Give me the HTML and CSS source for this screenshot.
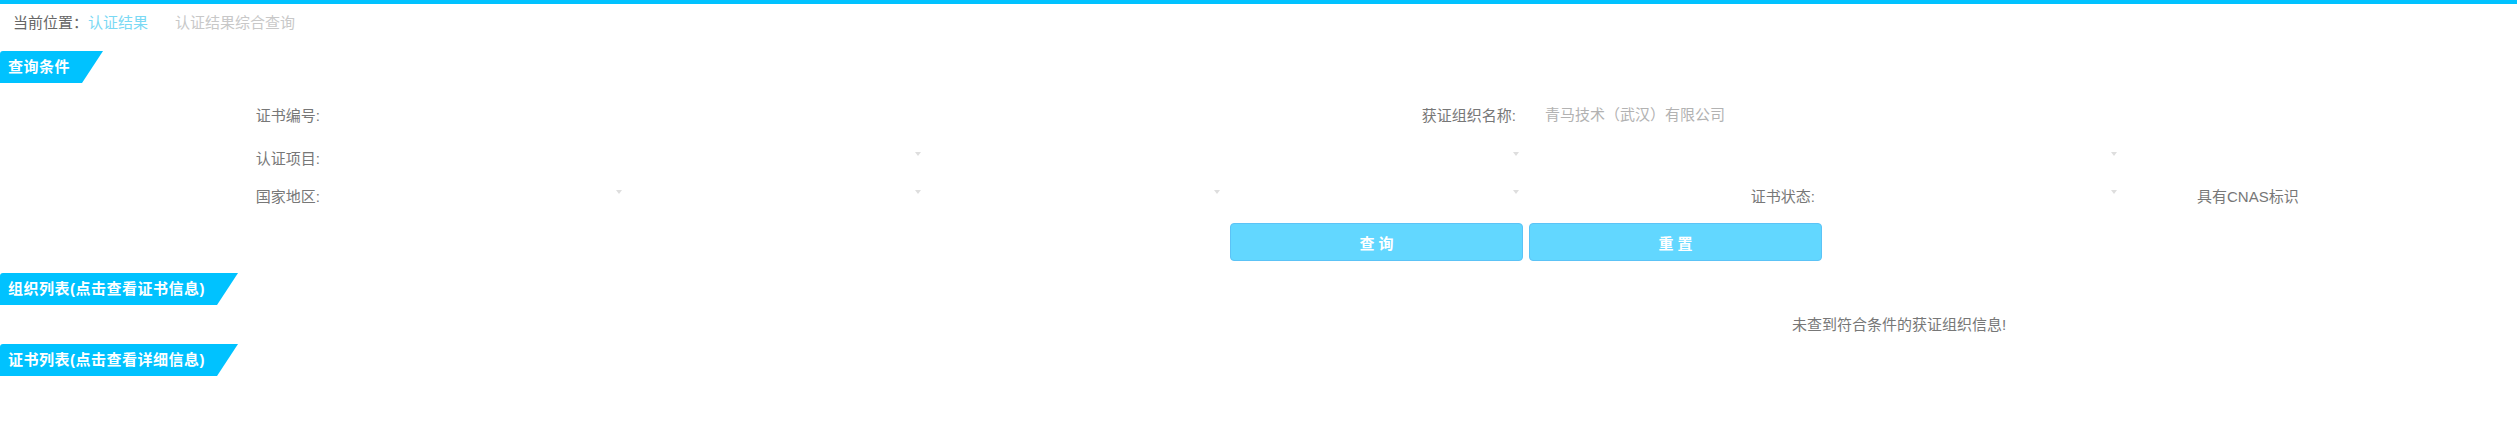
FILE: index.html
```html
<!DOCTYPE html>
<html>
<head>
    <meta charset="UTF-8">
    <title>认证结果综合查询</title>
    <link rel="stylesheet" href="styles.css">
</head>
<body>
<div class="topbar"></div>
<div class="crumb">
    <span class="crumb-here">当前位置：</span><span class="crumb-link">认证结果</span><span class="crumb-last">认证结果综合查询</span>
</div>

<div class="tag">查询条件</div>
<div class="query">
    <div class="label">证书编号:</div>
    <div class="field span3"><input type="text" class="txt"></div>
    <div class="label">获证组织名称:</div>
    <div class="field span3"><input type="text" class="txt org" placeholder="青马技术（武汉）有限公司"></div>

    <div class="label">认证项目:</div>
    <div class="field span2 sel"><select></select></div>
    <div class="field span2 sel"><select></select></div>
    <div class="field span2 sel"><select></select></div>
    <div class="field"></div>

    <div class="label">国家地区:</div>
    <div class="field sel"><select></select></div>
    <div class="field sel"><select></select></div>
    <div class="field sel"><select></select></div>
    <div class="field sel"><select></select></div>
    <div class="label">证书状态:</div>
    <div class="field sel"><select></select></div>
    <div class="field cnas">具有CNAS标识</div>
</div>
<div class="actions">
    <button class="btn">查 询</button>
    <button class="btn">重 置</button>
</div>

<div class="tag">组织列表(点击查看证书信息)</div>
<div class="empty">未查到符合条件的获证组织信息!</div>

<div class="tag">证书列表(点击查看详细信息)</div>
</body>
</html>
```

FILE: styles.css
```css
body {
    margin: 0;
    padding: 0;
    background-color: #fff;
    color: #777;
    font-size: 15px;
    font-family: "Liberation Sans", "Noto Sans CJK SC", sans-serif;
}

.topbar {
    height: 4px;
    background-color: #00c2ff;
}

.crumb {
    padding: 8px 13px;
    line-height: 22px;
    margin-bottom: 9px;
}

.crumb-here {
    color: #666;
}

.crumb-link {
    color: #7ad9f4;
}

.crumb-last {
    color: #c8c8c8;
    margin-left: 27px;
}

.tag {
    display: table;
    height: 32px;
    line-height: 32px;
    padding: 0 33px 0 8px;
    background-color: #00c2ff;
    color: #fff;
    font-weight: bold;
    letter-spacing: 0.5px;
    border-top-left-radius: 3px;
    clip-path: polygon(0 0, 100% 0, calc(100% - 21px) 100%, 0 100%);
}

.query {
    display: grid;
    grid-template-columns: repeat(8, 299px);
    grid-template-rows: 40px 46px 30px;
    margin: 11px 0 0 28px;
}

.label {
    text-align: right;
    padding-right: 7px;
    display: flex;
    align-items: center;
    justify-content: flex-end;
}

.field {
    position: relative;
    display: flex;
    align-items: center;
}

.span2 {
    grid-column: span 2;
}

.span3 {
    grid-column: span 3;
}

.txt {
    border: none;
    outline: none;
    background: transparent;
    width: 100%;
    height: 26px;
    font-size: 15px;
    font-family: inherit;
    color: #777;
}

.org {
    padding-left: 22px;
}

.org::placeholder {
    color: #b2b2b2;
}

.sel select {
    appearance: none;
    border: none;
    outline: none;
    background: transparent;
    width: 100%;
    height: 26px;
}

.sel::after {
    content: "";
    position: absolute;
    right: 4px;
    top: 50%;
    margin-top: -5px;
    border-left: 3px solid transparent;
    border-right: 3px solid transparent;
    border-top: 4px solid #dedede;
}

.cnas {
    padding-left: 76px;
}

.actions {
    display: flex;
    gap: 6px;
    margin: 13px 0 12px 1230px;
}

.btn {
    width: 293px;
    height: 38px;
    background-color: #62d7ff;
    border: 1px solid #5cc3f6;
    border-radius: 4px;
    color: #fff;
    font-size: 15px;
    font-weight: bold;
    font-family: inherit;
    padding: 0;
}

.empty {
    height: 39px;
    line-height: 39px;
    padding-left: 1792px;
    box-sizing: border-box;
}
```
